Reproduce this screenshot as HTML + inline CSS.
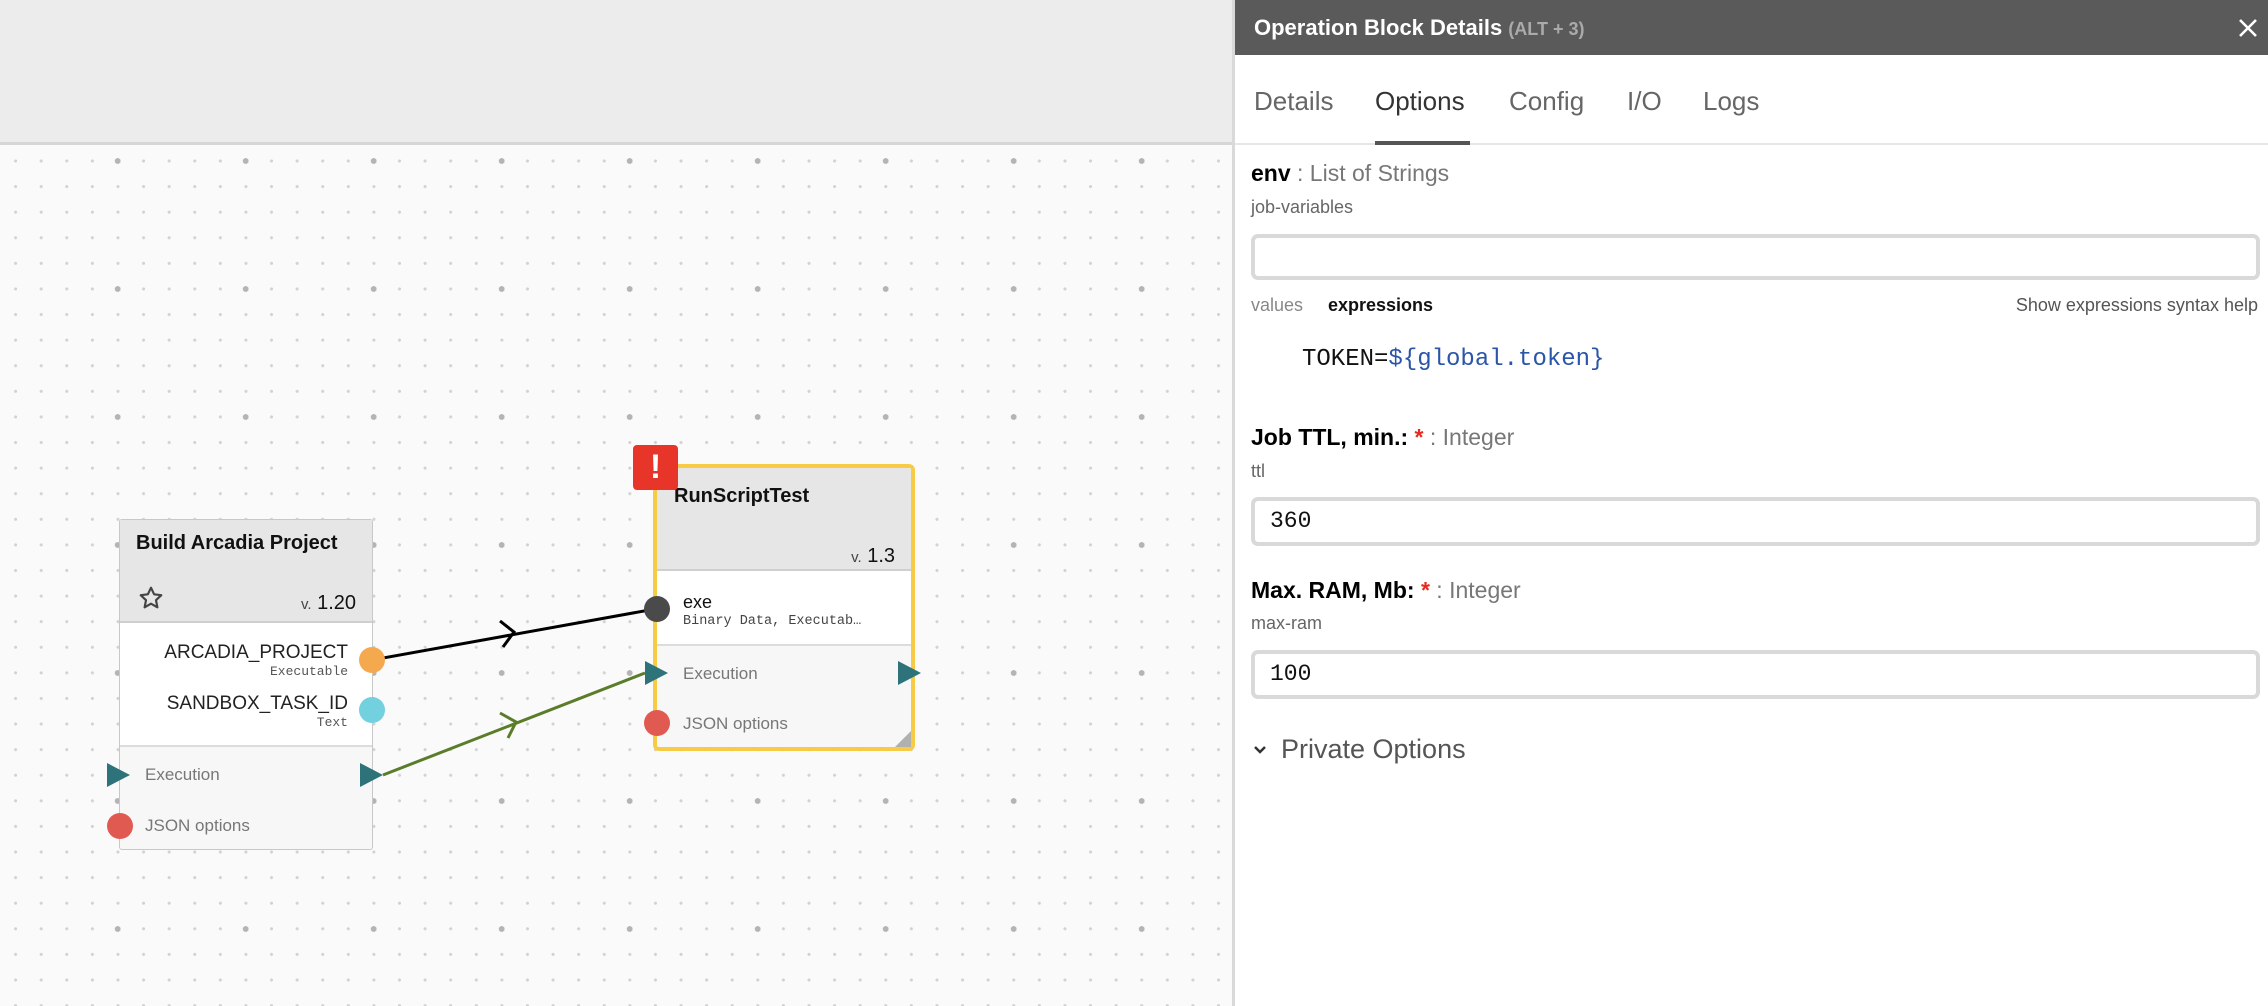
<!DOCTYPE html>
<html><head><meta charset="utf-8"><style>
*{margin:0;padding:0;box-sizing:border-box}
body{width:2268px;height:1006px;overflow:hidden;background:#fafafa;font-family:"Liberation Sans",sans-serif;position:relative}
.a{position:absolute;white-space:nowrap}
#top{left:0;top:0;width:1232px;height:145px;background:#ececec;border-bottom:3px solid #d6d6d6}
#canvas{left:0;top:148px;width:1232px;height:858px;
background-image:radial-gradient(circle,#b4b4b4 2.6px,transparent 3.2px),radial-gradient(circle,#d2d2d2 1.3px,transparent 1.8px);
background-size:128px 128px,25.6px 25.6px;background-position:53.7px 77px,2.8px 0.2px}
.node{position:absolute;border:1.5px solid #c8c8c8;border-radius:3px;background:#f7f7f7;overflow:visible}
.hdr{position:absolute;left:0;top:0;right:0;background:#e6e6e6;border-bottom:2px solid #cfcfcf}
.mid{position:absolute;left:0;right:0;background:#fff;border-bottom:2px solid #dcdcdc}
.circ{position:absolute;width:26px;height:26px;border-radius:50%}
.tri{position:absolute;width:0;height:0;border-top:12px solid transparent;border-bottom:12px solid transparent;border-left:23px solid #2e7379}
.mono{font-family:"Liberation Mono",monospace}
#panel{left:1232px;top:0;width:1036px;height:1006px;background:#fff;border-left:3px solid #d9d9d9}
.inp{position:absolute;left:16px;width:1009px;border:4px solid #d9d9d9;border-radius:7px;background:#fff}
.lab{font-size:23px;color:#000;font-weight:bold}
.lab span{font-weight:normal;color:#777}
.sub{font-size:18px;color:#666}
</style></head><body>
<div id="top" class="a"></div>
<div id="canvas" class="a"></div>

<svg class="a" style="left:0;top:0" width="1232" height="1006">
<line x1="372" y1="660" x2="655" y2="609" stroke="#000" stroke-width="3"/>
<polyline points="500,621 514,632 503,647" fill="none" stroke="#000" stroke-width="3"/>
<line x1="383" y1="775" x2="645" y2="673" stroke="#5a7d2a" stroke-width="3"/>
<polyline points="500,713 516,722 508,738" fill="none" stroke="#5a7d2a" stroke-width="3"/>
</svg>

<div class="node" style="left:119px;top:519px;width:254px;height:331px">
 <div class="hdr" style="height:103px"></div>
 <div class="a" style="left:16px;top:12px;font-size:20px;font-weight:bold;color:#111">Build Arcadia Project</div>
 <svg class="a" style="left:18px;top:65px" width="26" height="26" viewBox="0 0 24 24"><path d="M12 2.5l2.9 6.1 6.6.8-4.9 4.6 1.3 6.6L12 17.3l-5.9 3.3 1.3-6.6L2.5 9.4l6.6-.8z" fill="none" stroke="#444" stroke-width="2" stroke-linejoin="round"/></svg>
 <div class="a" style="right:16px;top:72px;font-size:20px;color:#111"><span style="font-size:15px;color:#444">v.</span> 1.20</div>
 <div class="mid" style="top:103px;height:124px"></div>
 <div class="a" style="right:24px;top:122px;font-size:19px;color:#222">ARCADIA_PROJECT</div>
 <div class="a mono" style="right:24px;top:144px;font-size:13px;color:#555">Executable</div>
 <div class="a" style="right:24px;top:173px;font-size:19px;color:#222">SANDBOX_TASK_ID</div>
 <div class="a mono" style="right:24px;top:195px;font-size:13px;color:#555">Text</div>
 <div class="a" style="left:25px;top:245px;font-size:17px;color:#777">Execution</div>
 <div class="a" style="left:25px;top:296px;font-size:17px;color:#777">JSON options</div>
</div>
<div class="circ" style="left:359px;top:647px;background:#f5a94f"></div>
<div class="circ" style="left:359px;top:697px;background:#72d0df"></div>
<div class="tri" style="left:107px;top:763px"></div>
<div class="tri" style="left:360px;top:763px"></div>
<div class="circ" style="left:107px;top:813px;background:#e05a52"></div>

<div class="node" style="left:653px;top:464px;width:262px;height:287px;border:4px solid #f7cb45;border-radius:6px">
 <div class="hdr" style="height:103px;border-radius:3px 3px 0 0"></div>
 <div class="a" style="left:17px;top:17px;font-size:20px;font-weight:bold;color:#111">RunScriptTest</div>
 <div class="a" style="right:16px;top:77px;font-size:20px;color:#111"><span style="font-size:15px;color:#444">v.</span> 1.3</div>
 <div class="mid" style="top:103px;height:75px"></div>
 <div class="a" style="left:26px;top:124px;font-size:18px;color:#111">exe</div>
 <div class="a mono" style="left:26px;top:146px;font-size:13.5px;color:#444">Binary Data, Executab…</div>
 <div class="a" style="left:26px;top:196px;font-size:17px;color:#777">Execution</div>
 <div class="a" style="left:26px;top:246px;font-size:17px;color:#777">JSON options</div>
 <div class="a" style="right:0;bottom:0;width:0;height:0;border-left:16px solid transparent;border-bottom:16px solid #b0b0b0"></div>
</div>
<div class="a" style="left:633px;top:445px;width:45px;height:45px;background:#e8352a;border-radius:4px;color:#fff;font-size:34px;font-weight:bold;text-align:center;line-height:45px">!</div>
<div class="circ" style="left:644px;top:596px;background:#4a4a4a"></div>
<div class="tri" style="left:645px;top:661px"></div>
<div class="tri" style="left:898px;top:661px"></div>
<div class="circ" style="left:644px;top:710px;background:#e05a52"></div>

<div id="panel" class="a">
 <div class="a" style="left:0;top:0;width:1036px;height:55px;background:#5a5a5a"></div>
 <div class="a" style="left:19px;top:15px;font-size:22px;font-weight:bold;color:#fff">Operation Block Details <span style="font-size:18px;font-weight:bold;color:#aaa">(ALT + 3)</span></div>
 <svg class="a" style="left:1003px;top:18px" width="20" height="20" viewBox="0 0 20 20"><path d="M2 2L18 18M18 2L2 18" stroke="#fff" stroke-width="2.6"/></svg>
 <div class="a" style="left:0;top:143px;width:1036px;height:2px;background:#e6e6e6"></div>
 <div class="a" style="left:19px;top:86px;font-size:26px;color:#666">Details</div>
 <div class="a" style="left:140px;top:86px;font-size:26px;color:#333">Options</div>
 <div class="a" style="left:140px;top:141px;width:95px;height:4px;background:#555"></div>
 <div class="a" style="left:274px;top:86px;font-size:26px;color:#666">Config</div>
 <div class="a" style="left:392px;top:86px;font-size:26px;color:#666">I/O</div>
 <div class="a" style="left:468px;top:86px;font-size:26px;color:#666">Logs</div>

 <div class="a lab" style="left:16px;top:160px">env <span>: List of Strings</span></div>
 <div class="a sub" style="left:16px;top:197px">job-variables</div>
 <div class="inp" style="top:234px;height:46px"></div>
 <div class="a sub" style="left:16px;top:295px;color:#888">values</div>
 <div class="a" style="left:93px;top:295px;font-size:18px;font-weight:bold;color:#111">expressions</div>
 <div class="a sub" style="right:10px;top:295px;color:#555">Show expressions syntax help</div>
 <div class="a mono" style="left:67px;top:346px;font-size:24px;color:#111">TOKEN=<span style="color:#2a55a8">${global.token}</span></div>

 <div class="a lab" style="left:16px;top:424px">Job TTL, min.: <b style="color:#e52b1e">*</b> <span>: Integer</span></div>
 <div class="a sub" style="left:16px;top:461px">ttl</div>
 <div class="inp" style="top:497px;height:49px"></div>
 <div class="a mono" style="left:35px;top:508px;font-size:23px;color:#111">360</div>

 <div class="a lab" style="left:16px;top:577px">Max. RAM, Mb: <b style="color:#e52b1e">*</b> <span>: Integer</span></div>
 <div class="a sub" style="left:16px;top:613px">max-ram</div>
 <div class="inp" style="top:650px;height:49px"></div>
 <div class="a mono" style="left:35px;top:661px;font-size:23px;color:#111">100</div>

 <svg class="a" style="left:18px;top:744px" width="14" height="12" viewBox="0 0 14 12"><polyline points="2,3 7,8 12,3" fill="none" stroke="#333" stroke-width="2.5"/></svg>
 <div class="a" style="left:46px;top:734px;font-size:27px;color:#555">Private Options</div>
</div>
</body></html>
